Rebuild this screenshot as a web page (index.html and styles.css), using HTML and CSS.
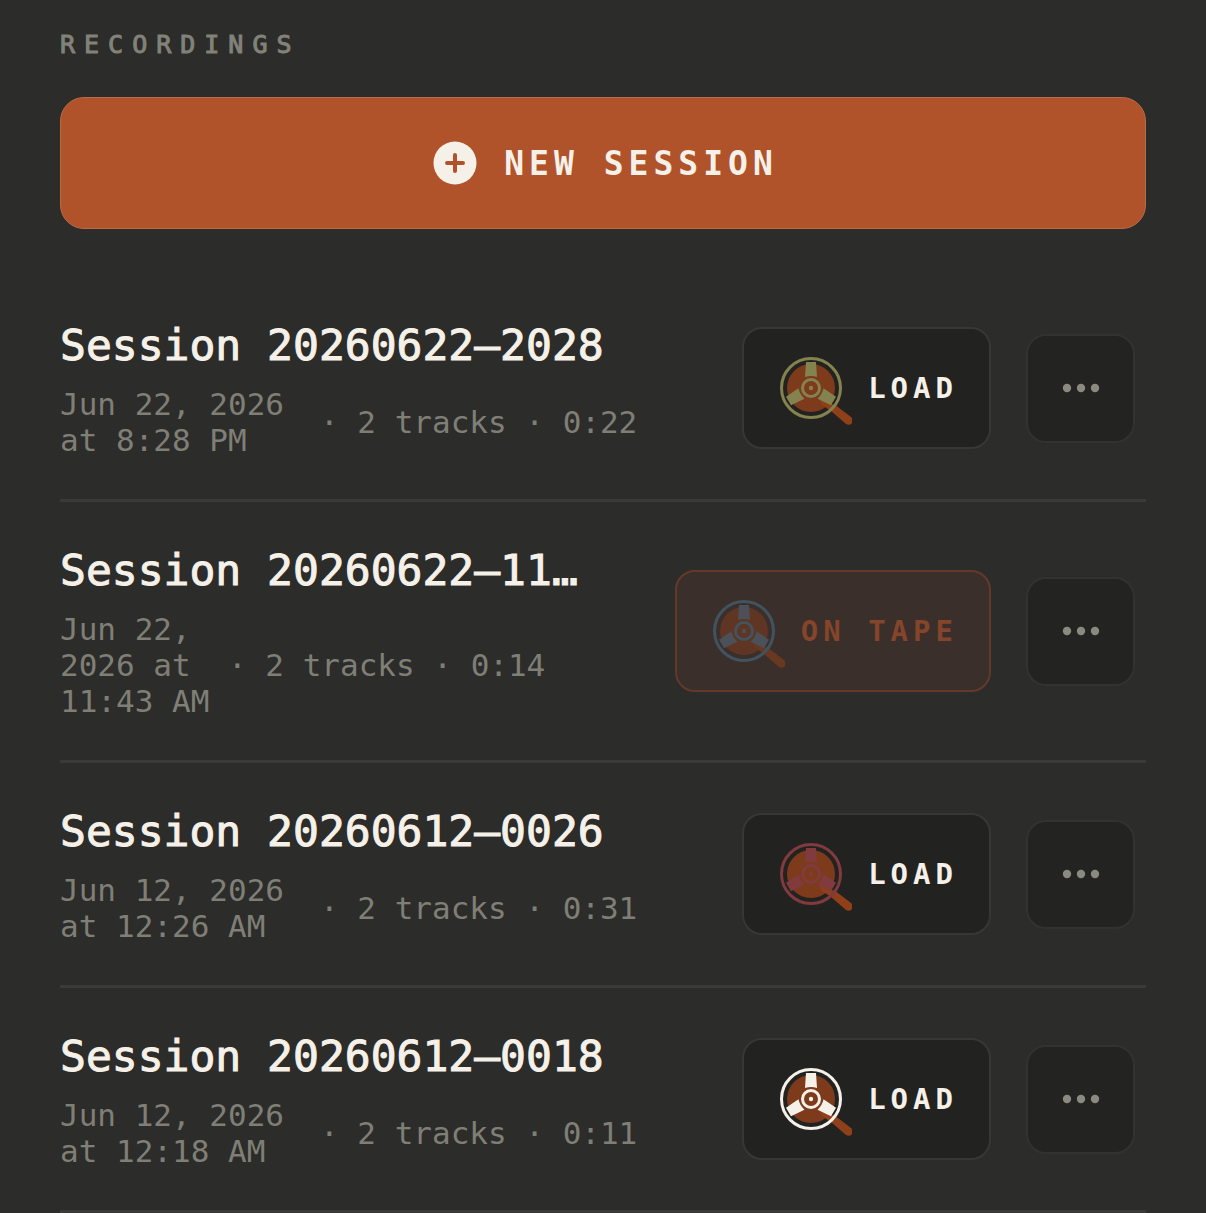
FILE: index.html
```
<!DOCTYPE html>
<html lang="en">
<head>
    <meta charset="UTF-8">
    <meta name="viewport" content="width=device-width, initial-scale=1.0">
    <title>Recordings</title>
    <link rel="stylesheet" href="styles.css">
</head>
<body>
    <!-- shared icons -->
    <svg class="sprite" aria-hidden="true">
        <symbol id="reel" viewBox="-33 -37 74 74">
            <circle class="reel-disc" r="24"/>
            <path class="reel-arm" d="M8 12 L15 14 L25 17.5 L40 29 A4.3 4.3 0 0 1 35 36 L20 23 L11 17 Z"/>
            <circle class="reel-line" r="29.5" stroke-width="3"/>
            <path class="reel-fill" d="M-5 -26 H5 L6 -11 Q0 -13 -6 -11 Z"/>
            <path class="reel-fill" transform="rotate(120)" d="M-5 -26 H5 L6 -11 Q0 -13 -6 -11 Z"/>
            <path class="reel-fill" transform="rotate(240)" d="M-5 -26 H5 L6 -11 Q0 -13 -6 -11 Z"/>
            <circle class="reel-line" r="8.5" stroke-width="3"/>
            <circle class="reel-fill" r="2.2"/>
        </symbol>
        <symbol id="dots" viewBox="0 0 38 10">
            <circle cx="5" cy="5" r="4.2"/>
            <circle cx="19" cy="5" r="4.2"/>
            <circle cx="33" cy="5" r="4.2"/>
        </symbol>
    </svg>

    <main class="recordings">
        <h1>RECORDINGS</h1>

        <button class="new-session" type="button">
            <svg class="plus-icon" viewBox="0 0 44 44" aria-hidden="true">
                <circle cx="22" cy="22" r="21.5"/>
                <path d="M22 14 V30 M14 22 H30"/>
            </svg>
            <span>NEW SESSION</span>
        </button>

        <ul class="session-list">
            <li class="session">
                <div class="session-info">
                    <h2>Session 20260622–2028</h2>
                    <div class="session-meta">
                        <span class="session-date">Jun 22, 2026 at 8:28 PM</span>
                        <span class="session-stats">· 2 tracks · 0:22</span>
                    </div>
                </div>
                <div class="session-actions">
                    <button class="load-button" type="button">
                        <svg class="reel-icon olive" aria-hidden="true"><use href="#reel"/></svg>
                        <span>LOAD</span>
                    </button>
                    <button class="more-button" type="button" aria-label="More">
                        <svg aria-hidden="true"><use href="#dots"/></svg>
                    </button>
                </div>
            </li>
            <li class="session on-tape">
                <div class="session-info">
                    <h2>Session 20260622–1143</h2>
                    <div class="session-meta">
                        <span class="session-date">Jun 22, 2026 at 11:43 AM</span>
                        <span class="session-stats">· 2 tracks · 0:14</span>
                    </div>
                </div>
                <div class="session-actions">
                    <button class="load-button" type="button" disabled>
                        <svg class="reel-icon blue" aria-hidden="true"><use href="#reel"/></svg>
                        <span>ON TAPE</span>
                    </button>
                    <button class="more-button" type="button" aria-label="More">
                        <svg aria-hidden="true"><use href="#dots"/></svg>
                    </button>
                </div>
            </li>
            <li class="session">
                <div class="session-info">
                    <h2>Session 20260612–0026</h2>
                    <div class="session-meta">
                        <span class="session-date">Jun 12, 2026 at 12:26 AM</span>
                        <span class="session-stats">· 2 tracks · 0:31</span>
                    </div>
                </div>
                <div class="session-actions">
                    <button class="load-button" type="button">
                        <svg class="reel-icon red" aria-hidden="true"><use href="#reel"/></svg>
                        <span>LOAD</span>
                    </button>
                    <button class="more-button" type="button" aria-label="More">
                        <svg aria-hidden="true"><use href="#dots"/></svg>
                    </button>
                </div>
            </li>
            <li class="session">
                <div class="session-info">
                    <h2>Session 20260612–0018</h2>
                    <div class="session-meta">
                        <span class="session-date">Jun 12, 2026 at 12:18 AM</span>
                        <span class="session-stats">· 2 tracks · 0:11</span>
                    </div>
                </div>
                <div class="session-actions">
                    <button class="load-button" type="button">
                        <svg class="reel-icon" aria-hidden="true"><use href="#reel"/></svg>
                        <span>LOAD</span>
                    </button>
                    <button class="more-button" type="button" aria-label="More">
                        <svg aria-hidden="true"><use href="#dots"/></svg>
                    </button>
                </div>
            </li>
        </ul>
    </main>
</body>
</html>
```
FILE: styles.css
```
* {
    box-sizing: border-box;
}

body {
    margin: 0;
    background-color: #2c2c2b;
    color: #f6f1e8;
    font-family: 'DejaVu Sans Mono', 'Liberation Mono', monospace;
}

button {
    font-family: inherit;
    font-weight: bold;
    color: inherit;
    cursor: pointer;
}

.sprite {
    display: none;
}

.recordings {
    padding: 29px 60px 0;
}

/* thin stroke gives the headings a medium weight */
h1,
h2 {
    font-weight: normal;
    -webkit-text-stroke: 1px currentColor;
}

h1 {
    margin: 0 0 36px;
    font-size: 25px;
    line-height: 32px;
    letter-spacing: 9px;
    color: #828278;
}

.new-session {
    display: flex;
    align-items: center;
    justify-content: center;
    gap: 27px;
    width: 100%;
    height: 132px;
    margin-bottom: 48px;
    padding: 0 0 0 5px;
    border: 1px solid #b86b47;
    border-radius: 24px;
    background-color: #b0532a;
    font-size: 33px;
    letter-spacing: 5px;
}

.plus-icon {
    width: 44px;
    height: 44px;
    fill: #f6f1e8;
}

.plus-icon path {
    stroke: #b0532a;
    stroke-width: 4;
    stroke-linecap: round;
}

.session-list {
    margin: 0;
    padding: 0;
    list-style: none;
}

.session {
    display: flex;
    align-items: center;
    gap: 85px;
    padding: 41px 11px 41px 0;
    border-bottom: 3px solid #3a3a38;
}

.session-info {
    flex: 1;
    min-width: 0;
}

h2 {
    margin: 0 0 14px;
    font-size: 43px;
    line-height: 54px;
    white-space: nowrap;
    overflow: hidden;
    text-overflow: ellipsis;
}

.session-meta {
    display: flex;
    align-items: center;
    gap: 6px;
    font-size: 31px;
    line-height: 36px;
    color: #7f7f76;
}

.session-date {
    flex: 0 0 254px;
}

.on-tape .session-date {
    flex-basis: 162px;
}

.session-stats {
    white-space: nowrap;
}

.session-actions {
    display: flex;
    align-items: center;
    gap: 35px;
}

.load-button {
    display: flex;
    align-items: center;
    gap: 16px;
    height: 122px;
    padding: 0 31px 0 34px;
    border: 2px solid #373735;
    border-radius: 20px;
    background-color: #222221;
    font-size: 29px;
    letter-spacing: 5px;
    white-space: nowrap;
}

.load-button:disabled {
    border-color: #65392a;
    background-color: #3a2f2a;
    color: #84452a;
    cursor: default;
}

.more-button {
    display: flex;
    align-items: center;
    justify-content: center;
    width: 109px;
    height: 109px;
    padding: 0;
    border: 2px solid #323231;
    border-radius: 20px;
    background-color: #232322;
}

.more-button svg {
    width: 38px;
    height: 10px;
    fill: #8a8a80;
}

.reel-icon {
    width: 74px;
    height: 74px;
    color: #f6f1e8;
    --disc: #7d3b1c;
    --arm: #8f3f1a;
}

.reel-icon.olive {
    color: #84834f;
}

.reel-icon.red {
    color: #813a3d;
}

.reel-icon.blue {
    color: #4c5059;
    --ring: #40535f;
    --disc: #5f3523;
    --arm: #693821;
}

.reel-disc {
    fill: var(--disc);
}

.reel-arm {
    fill: var(--arm);
}

.reel-line {
    fill: none;
    stroke: var(--ring, currentColor);
}

.reel-fill {
    fill: currentColor;
}
```
